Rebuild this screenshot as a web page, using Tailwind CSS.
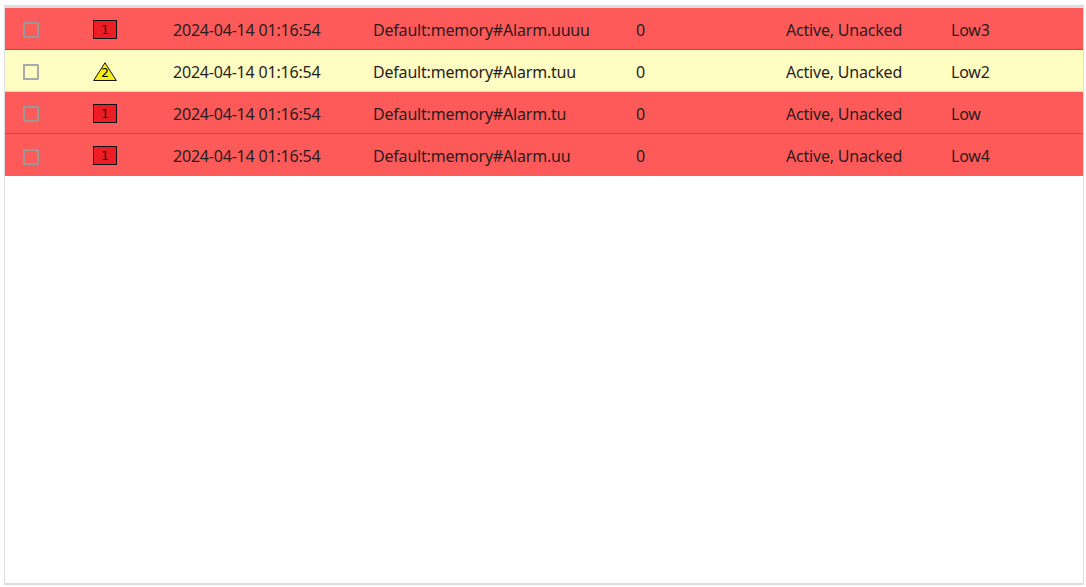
<!DOCTYPE html>
<html lang="en">
<head>
  <meta charset="UTF-8">
  <title>Alarms</title>
  <script src="https://cdn.jsdelivr.net/npm/@tailwindcss/browser@4"></script>
</head>
<body class="bg-white h-[587px] overflow-hidden font-['Noto_Sans',sans-serif] text-[16px] tracking-[-0.2px] text-[#2a1c1c]">
  <div class="ml-[4px] mt-[5px] w-[1080px] h-[580px] border border-[#ddd] border-t-[3px] border-b-2">
    <!-- row 1 -->
    <div class="flex items-center h-[42px] pt-[1px] bg-[#ff5a5a] border-b border-[#e23a3a]">
      <div class="w-[88px] pl-[18px] pt-[2px]"><div class="w-[16px] h-[16px] border-2 border-[#999] rounded-[1px]"></div></div>
      <div class="w-[80px]"><div class="w-[24px] h-[19px] pt-[1px] bg-[#ee1c25] border border-[#111] flex items-center justify-center font-['DejaVu_Sans',sans-serif] text-[12px] tracking-normal text-black">1</div></div>
      <div class="w-[200px] pt-[1px]">2024-04-14 01:16:54</div>
      <div class="w-[263px] pt-[1px]">Default:memory#Alarm.uuuu</div>
      <div class="w-[150px] pt-[1px]">0</div>
      <div class="w-[165px] pt-[1px]">Active, Unacked</div>
      <div class="pt-[1px]">Low3</div>
    </div>
    <!-- row 2 -->
    <div class="flex items-center h-[42px] pt-[1px] bg-[#fffdc2] border-b border-[#f5e93a]">
      <div class="w-[88px] pl-[18px] pt-[2px]"><div class="w-[16px] h-[16px] border-2 border-[#aaa] rounded-[1px]"></div></div>
      <div class="w-[80px]">
        <div class="relative w-[24px] h-[19px]">
          <svg width="24" height="19" viewBox="0 0 24 19" class="block"><path d="M12 .8 23.3 18.5H.7Z" fill="#f7ee17" stroke="#111" stroke-width="1"/></svg>
          <span class="absolute inset-x-0 bottom-[1px] text-center font-['DejaVu_Sans',sans-serif] text-[12px] tracking-normal leading-[14px] text-black">2</span>
        </div>
      </div>
      <div class="w-[200px] pt-[1px]">2024-04-14 01:16:54</div>
      <div class="w-[263px] pt-[1px]">Default:memory#Alarm.tuu</div>
      <div class="w-[150px] pt-[1px]">0</div>
      <div class="w-[165px] pt-[1px]">Active, Unacked</div>
      <div class="pt-[1px]">Low2</div>
    </div>
    <!-- row 3 -->
    <div class="flex items-center h-[42px] pt-[1px] bg-[#ff5a5a] border-b border-[#e23a3a]">
      <div class="w-[88px] pl-[18px] pt-[2px]"><div class="w-[16px] h-[16px] border-2 border-[#999] rounded-[1px]"></div></div>
      <div class="w-[80px]"><div class="w-[24px] h-[19px] pt-[1px] bg-[#ee1c25] border border-[#111] flex items-center justify-center font-['DejaVu_Sans',sans-serif] text-[12px] tracking-normal text-black">1</div></div>
      <div class="w-[200px] pt-[1px]">2024-04-14 01:16:54</div>
      <div class="w-[263px] pt-[1px]">Default:memory#Alarm.tu</div>
      <div class="w-[150px] pt-[1px]">0</div>
      <div class="w-[165px] pt-[1px]">Active, Unacked</div>
      <div class="pt-[1px]">Low</div>
    </div>
    <!-- row 4 -->
    <div class="flex items-center h-[42px] pt-[1px] bg-[#ff5a5a]">
      <div class="w-[88px] pl-[18px] pt-[2px]"><div class="w-[16px] h-[16px] border-2 border-[#999] rounded-[1px]"></div></div>
      <div class="w-[80px]"><div class="w-[24px] h-[19px] pt-[1px] bg-[#ee1c25] border border-[#111] flex items-center justify-center font-['DejaVu_Sans',sans-serif] text-[12px] tracking-normal text-black">1</div></div>
      <div class="w-[200px] pt-[1px]">2024-04-14 01:16:54</div>
      <div class="w-[263px] pt-[1px]">Default:memory#Alarm.uu</div>
      <div class="w-[150px] pt-[1px]">0</div>
      <div class="w-[165px] pt-[1px]">Active, Unacked</div>
      <div class="pt-[1px]">Low4</div>
    </div>
  </div>
</body>
</html>
